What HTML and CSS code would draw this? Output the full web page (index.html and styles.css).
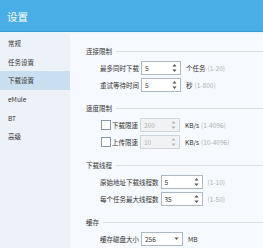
FILE: index.html
```html
<!DOCTYPE html>
<html>
<head>
<meta charset="utf-8">
<link rel="stylesheet" href="styles.css">
</head>
<body>
<div class="app">
  <header class="hdr"><span class="title">设置</span></header>
  <div class="main">
    <nav class="side">
      <div class="item">常规</div>
      <div class="item">任务设置</div>
      <div class="item active">下载设置</div>
      <div class="item">eMule</div>
      <div class="item">BT</div>
      <div class="item">高级</div>
    </nav>
    <div class="content">
      <section class="sec">
        <div class="sec-title"><span>连接限制</span><i class="rule"></i></div>
        <div class="row">
          <span class="lbl">最多同时下载</span>
          <div class="spin"><span class="val">5</span><svg class="arrows" viewBox="0 0 5 10" width="5" height="10"><path d="M2.5 1 L4.5 3.5 L0.5 3.5 Z M2.5 9 L4.5 6.5 L0.5 6.5 Z" fill="#555"/></svg></div>
          <span class="unit">个任务</span><span class="hint">(1-20)</span>
        </div>
        <div class="row">
          <span class="lbl">重试等待时间</span>
          <div class="spin"><span class="val">5</span><svg class="arrows" viewBox="0 0 5 10" width="5" height="10"><path d="M2.5 1 L4.5 3.5 L0.5 3.5 Z M2.5 9 L4.5 6.5 L0.5 6.5 Z" fill="#555"/></svg></div>
          <span class="unit">秒</span><span class="hint">(1-800)</span>
        </div>
      </section>
      <section class="sec">
        <div class="sec-title"><span>速度限制</span><i class="rule"></i></div>
        <div class="row">
          <span class="cb"></span><span class="lbl">下载限速</span>
          <div class="spin disabled"><span class="val">200</span><svg class="arrows" viewBox="0 0 5 10" width="5" height="10"><path d="M2.5 1 L4.5 3.5 L0.5 3.5 Z M2.5 9 L4.5 6.5 L0.5 6.5 Z" fill="#b5b5b5"/></svg></div>
          <span class="unit">KB/s</span><span class="hint">(1-4096)</span>
        </div>
        <div class="row">
          <span class="cb"></span><span class="lbl">上传限速</span>
          <div class="spin disabled"><span class="val">10</span><svg class="arrows" viewBox="0 0 5 10" width="5" height="10"><path d="M2.5 1 L4.5 3.5 L0.5 3.5 Z M2.5 9 L4.5 6.5 L0.5 6.5 Z" fill="#b5b5b5"/></svg></div>
          <span class="unit">KB/s</span><span class="hint">(10-4096)</span>
        </div>
      </section>
      <section class="sec">
        <div class="sec-title"><span>下载线程</span><i class="rule"></i></div>
        <div class="row">
          <span class="lbl">原始地址下载线程数</span>
          <div class="spin wide"><span class="val">5</span><svg class="arrows" viewBox="0 0 5 10" width="5" height="10"><path d="M2.5 1 L4.5 3.5 L0.5 3.5 Z M2.5 9 L4.5 6.5 L0.5 6.5 Z" fill="#555"/></svg></div>
          <span class="hint">(1-10)</span>
        </div>
        <div class="row">
          <span class="lbl">每个任务最大线程数</span>
          <div class="spin wide"><span class="val">35</span><svg class="arrows" viewBox="0 0 5 10" width="5" height="10"><path d="M2.5 1 L4.5 3.5 L0.5 3.5 Z M2.5 9 L4.5 6.5 L0.5 6.5 Z" fill="#555"/></svg></div>
          <span class="hint">(1-50)</span>
        </div>
      </section>
      <section class="sec">
        <div class="sec-title"><span>缓存</span><i class="rule"></i></div>
        <div class="row">
          <span class="lbl">缓存磁盘大小</span>
          <div class="spin wide"><span class="val">256</span><svg class="arrows" viewBox="0 0 5 10" width="5" height="10"><path d="M0.5 3.5 L4.5 3.5 L2.5 6 Z" fill="#555"/></svg></div>
          <span class="unit">MB</span>
        </div>
      </section>
    </div>
  </div>
</div>
</body>
</html>
```

FILE: styles.css
```css
html, body {
  margin: 0;
  padding: 0;
}
body {
  width: 263px;
  height: 248px;
  overflow: hidden;
  font-family: "Noto Sans CJK SC", "Noto Sans", sans-serif;
  color: #333;
  background: #f6f9fd;
}
.app {
  display: flex;
  flex-direction: column;
  height: 248px;
}
.hdr {
  height: 31px;
  background: #49aee5;
  border-bottom: 1px solid #3b9ad0;
  display: flex;
  align-items: center;
  padding-left: 7px;
  flex-shrink: 0;
}
.title {
  color: #fff;
  font-size: 10.5px;
  line-height: 1;
  margin-top: 4px;
}
.main {
  flex: 1;
  display: flex;
  border-top: 2px solid #e8f6fc;
}
.side {
  width: 70px;
  background: #edf2f9;
  padding-top: 0;
  flex-shrink: 0;
}
.item {
  height: 18.6px;
  display: flex;
  align-items: center;
  padding-left: 8px;
  font-size: 6.5px;
  color: #333;
}
.item.active {
  background: #c9dff0;
}
.content {
  flex: 1;
  padding: 8.5px 0 0 16px;
}
.sec {
  margin-bottom: 6px;
}
.sec-title {
  height: 17px;
  display: flex;
  align-items: center;
  font-size: 6.5px;
  color: #333;
}
.rule {
  flex: 1;
  height: 1px;
  background: #d9dfe6;
  margin-left: 4px;
}
.row {
  height: 17px;
  display: flex;
  align-items: center;
  padding-left: 14px;
  font-size: 6.5px;
}
.lbl {
  margin-right: 2px;
}
.cb {
  width: 8px;
  height: 8px;
  border: 1px solid #8d99a6;
  background: #fff;
  margin-right: 1px;
  margin-left: 1px;
}
.spin {
  width: 40px;
  height: 14px;
  box-sizing: border-box;
  border: 1px solid #aeb8c3;
  background: #fff;
  display: flex;
  align-items: center;
  justify-content: space-between;
  padding: 0 3px 0 3px;
}
.spin.wide {
  width: 42px;
}
.spin.disabled {
  background: #f1f2f3;
  border-color: #d0d5da;
  color: #b0b0b0;
}
.val {
  font-size: 6.5px;
}
.unit {
  margin-left: 5px;
}
.hint {
  margin-left: 2px;
  color: #a9b0b8;
}
.spin.wide + .hint {
  margin-left: 5px;
}
```
